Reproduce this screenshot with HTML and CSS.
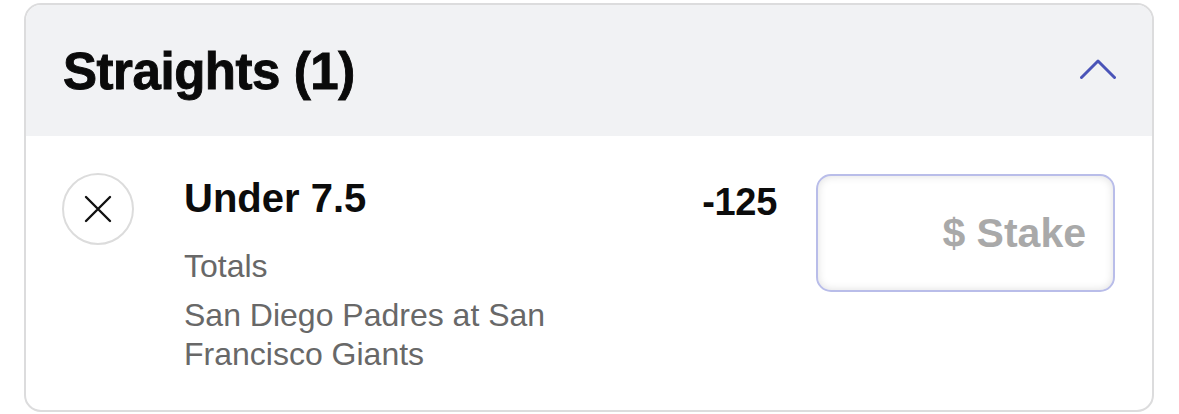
FILE: index.html
```html
<!DOCTYPE html>
<html lang="en">
<head>
<meta charset="utf-8">
<title>Straights</title>
<link rel="stylesheet" href="styles.css">
</head>
<body>
<section class="card">
  <header class="card-head">
    <h2 class="title">Straights (1)</h2>
    <svg class="chevron" width="36" height="20" viewBox="0 0 36 20" aria-hidden="true">
      <path d="M1.5 18.5 L18 2 L34.5 18.5" fill="none" stroke="#4a54b8" stroke-width="3" stroke-linecap="round" stroke-linejoin="round"/>
    </svg>
  </header>
  <div class="bet">
    <button class="remove" aria-label="Remove">
      <svg width="28" height="28" viewBox="0 0 28 28" aria-hidden="true">
        <path d="M2 2 L26 26 M26 2 L2 26" fill="none" stroke="#111" stroke-width="2.4" stroke-linecap="round"/>
      </svg>
    </button>
    <div class="info">
      <div class="pick">Under 7.5</div>
      <div class="market">Totals</div>
      <div class="event">San Diego Padres at San Francisco Giants</div>
    </div>
    <div class="odds">-125</div>
    <div class="stake"><span class="placeholder">$ Stake</span></div>
  </div>
</section>
</body>
</html>
```

FILE: styles.css
```css
* { box-sizing: border-box; }
html, body {
  margin: 0;
  padding: 0;
  background: #ffffff;
}
body {
  font-family: "Liberation Sans", Arial, sans-serif;
  color: #111;
}
.card {
  margin: 3px 0 0 24px;
  width: 1130px;
  height: 409px;
  border: 2px solid #dcdcdd;
  border-radius: 17px;
  overflow: hidden;
  background: #fff;
}
.card-head {
  height: 131px;
  background: #f1f2f4;
  display: flex;
  align-items: center;
  justify-content: space-between;
  padding: 0 36px 0 37px;
}
.title {
  margin: 0;
  font-size: 51px;
  font-weight: 700;
  letter-spacing: -0.45px;
  line-height: 60px;
  color: #0a0a0a;
  -webkit-text-stroke: 0.9px #0a0a0a;
  position: relative;
  top: 1px;
}
.chevron {
  display: block;
  margin-top: -3px;
}
.bet {
  display: flex;
  align-items: flex-start;
  padding: 37px 37px 0 36px;
}
.remove {
  flex: none;
  width: 72px;
  height: 72px;
  border-radius: 50%;
  border: 2px solid #dcdcdc;
  background: #fff;
  padding: 0;
  display: flex;
  align-items: center;
  justify-content: center;
  margin-right: 50px;
}
.remove svg { display: block; }
.info {
  flex: 1;
  min-width: 0;
  padding-top: 2px;
}
.pick {
  font-size: 40px;
  font-weight: 700;
  line-height: 46px;
  color: #0c0c0c;
}
.market, .event {
  font-size: 32px;
  line-height: 39px;
  color: #686868;
}
.market { margin-top: 26px; }
.event { margin-top: 10px; max-width: 480px; }
.odds {
  flex: none;
  width: 110px;
  text-align: right;
  font-size: 38px;
  font-weight: 700;
  line-height: 46px;
  letter-spacing: -0.3px;
  padding-top: 6px;
  margin-right: 39px;
  color: #0c0c0c;
}
.stake {
  flex: none;
  width: 299px;
  height: 118px;
  margin-top: 1px;
  border: 2px solid #b9bde9;
  border-radius: 15px;
  box-shadow: inset 0 0 9px rgba(0, 0, 0, 0.13);
  display: flex;
  align-items: center;
  justify-content: flex-end;
  padding-right: 27px;
}
.placeholder {
  font-size: 41px;
  font-weight: 700;
  color: #a9a9a9;
  line-height: 1;
}
```
